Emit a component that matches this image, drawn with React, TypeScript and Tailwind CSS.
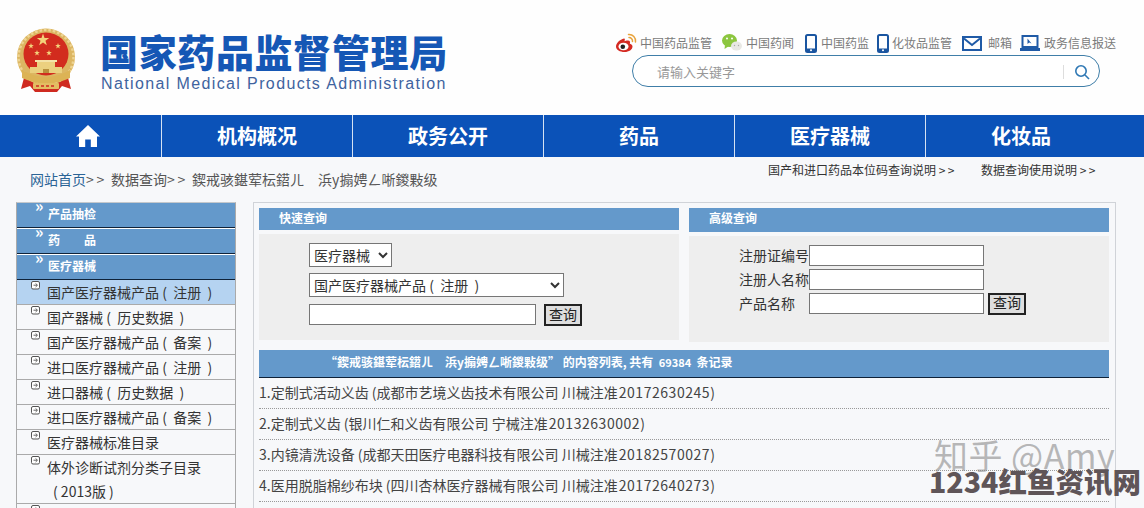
import React from "react";

const FONT = '"Noto Sans CJK SC", "Liberation Sans", sans-serif';

function Emblem() {
  const star = (cx: number, cy: number, r: number) => {
    const pts: string[] = [];
    for (let i = 0; i < 10; i++) {
      const rad = i % 2 === 0 ? r : r * 0.4;
      const a = (-90 + i * 36) * (Math.PI / 180);
      pts.push(`${(cx + rad * Math.cos(a)).toFixed(2)},${(cy + rad * Math.sin(a)).toFixed(2)}`);
    }
    return <polygon key={`${cx}-${cy}`} points={pts.join(" ")} fill="#f3d27a" />;
  };
  return (
    <svg width="60" height="65" viewBox="0 0 60 65" className="shrink-0">
      <path d="M9 46 L5 61 L14 58 L19 64 L41 64 L46 58 L55 61 L51 46 Z" fill="#cf2a20" />
      <ellipse cx="30" cy="29" rx="29" ry="28.500" fill="#dcb662" />
      <ellipse cx="30" cy="29" rx="27.500" ry="27" fill="none" stroke="#eed493" strokeWidth="2.500" strokeDasharray="2.500 2" />
      <ellipse cx="30" cy="26" rx="22.500" ry="21.500" fill="#d22c1e" />
      {star(27, 12, 6.500)}
      {star(15, 18, 3)}
      {star(21, 25, 3)}
      {star(33, 25, 3)}
      {star(42, 18, 3)}
      <rect x="19" y="32" width="22" height="2" fill="#f4e3a8" />
      <rect x="21" y="34" width="18" height="5" fill="#ecd07f" />
      <rect x="14" y="39" width="32" height="6" fill="#ead07f" />
      <rect x="27" y="41" width="6" height="4" fill="#b88f3c" />
      <path d="M6 42 Q30 56 54 42 L54 50 Q30 61 6 50 Z" fill="#dcb355" />
      <rect x="17" y="55" width="26" height="6" rx="1" fill="#e3bd62" />
      <path d="M20 58H40" stroke="#cf2a20" strokeWidth="1.500" strokeDasharray="3 2" />
    </svg>
  );
}

function Weibo() {
  return (
    <svg width="22" height="20" viewBox="0 0 22 20" className="shrink-0">
      <path d="M9 5.500C5 6.500 1 10 1 13.500 1 16.800 5 19 9.500 19 14 19 17.500 16.500 17.500 13.500 17.500 11.500 15.500 11 14.800 10.700 15.500 9 15 7.500 13 7.500 11.500 7.500 10 8 9.500 8.300 10 6.500 10 5.300 9 5.500Z" fill="#d42a22" />
      <ellipse cx="8.500" cy="13.500" rx="5" ry="3.800" fill="#fff" />
      <circle cx="7.800" cy="13.800" r="2.300" fill="#222" />
      <path d="M13.500 1.500A6.500 6.500 0 0 1 20.500 9M14 4.500A3.500 3.500 0 0 1 17.500 8.500" fill="none" stroke="#e8a33c" strokeWidth="1.500" strokeLinecap="round" />
    </svg>
  );
}

function Wechat() {
  return (
    <svg width="22" height="20" viewBox="0 0 22 20" className="shrink-0">
      <ellipse cx="8.500" cy="7.500" rx="7.500" ry="6.500" fill="#8cc63f" />
      <path d="M4 12 L3.500 16 L8 13Z" fill="#8cc63f" />
      <circle cx="6" cy="5.500" r="1" fill="#fff" />
      <circle cx="11" cy="5.500" r="1" fill="#fff" />
      <ellipse cx="15.500" cy="13" rx="5.500" ry="4.500" fill="#e8e8e4" />
      <circle cx="13.500" cy="12.500" r=".7" fill="#aaa" />
      <circle cx="17.500" cy="12.500" r=".7" fill="#aaa" />
    </svg>
  );
}

function Phone() {
  return (
    <svg width="12" height="19" viewBox="0 0 12 19" className="shrink-0">
      <rect x="1" y="1" width="10" height="17" rx="1.500" fill="none" stroke="#1a55a0" strokeWidth="2" />
      <rect x="1" y="14.500" width="10" height="3.500" fill="#1a55a0" />
      <circle cx="6" cy="16.200" r="1" fill="#fff" />
    </svg>
  );
}

function Mail() {
  return (
    <svg width="20" height="15" viewBox="0 0 20 15" className="shrink-0">
      <rect x="1" y="1" width="18" height="13" fill="none" stroke="#1f5aa6" strokeWidth="2" />
      <path d="M2 2.500 L10 9 L18 2.500" fill="none" stroke="#1f5aa6" strokeWidth="2" />
    </svg>
  );
}

function Monitor() {
  return (
    <svg width="20" height="17" viewBox="0 0 20 17" className="shrink-0">
      <rect x="2.500" y="1" width="15" height="11" fill="none" stroke="#1f5aa6" strokeWidth="2" />
      <path d="M7.500 3.500 L7.500 9 L9.200 7.600 L11.500 8.500Z" fill="#1f5aa6" />
      <rect x="0" y="13" width="20" height="3" fill="#1f5aa6" />
    </svg>
  );
}

function TopLink({ icon, text, className }: { icon: React.ReactNode; text: string; className: string }) {
  return (
    <div className={`flex shrink-0 items-center whitespace-nowrap ${className}`}>
      {icon}
      <span className="text-[12px] leading-none text-[#7b7b7b]">{text}</span>
    </div>
  );
}

function SideHead({ text }: { text: string }) {
  return (
    <div className="relative flex h-[25px] items-center border-b border-[#0f2238] bg-[#6499cb] pb-[3px] pl-[31px] text-[12px] font-bold text-white">
      <span className="absolute left-[18px] top-[-6px] text-[16px] font-bold leading-none">»</span>
      {text}
    </div>
  );
}

function ArrowBox() {
  return (
    <svg width="10" height="9" viewBox="0 0 10 9" className="absolute left-[14px] top-[1px]">
      <rect x=".5" y=".5" width="8" height="7.500" rx="1.500" fill="#fff" stroke="#555" />
      <path d="M2.500 4.200H6M4.600 2.500 L6.500 4.200 L4.600 6" fill="none" stroke="#555" strokeWidth=".9" />
    </svg>
  );
}

function SideRow({ text, active, second }: { text: string; active?: boolean; second?: string }) {
  return (
    <div className={`relative border-b border-[#aaaaaa] pl-[30px] text-[14px] leading-[24px] text-[#333] ${active ? "bg-[#b5d3f1]" : ""}`}>
      <ArrowBox />
      <div className="min-h-[24px]">{text}</div>
      {second && <div className="pl-[6px]">{second}</div>}
    </div>
  );
}

function Btn() {
  return (
    <button className="h-[22px] w-[38px] border-2 border-[#222] bg-[#dedede] pb-[3px] text-[14px] leading-none text-[#222]">查询</button>
  );
}

const inputCls = "h-[21px] border border-[#767676] bg-white";
const selectCls = "h-[24px] border border-[#767676] bg-white text-[14px] text-[#333]";

function Row({ name, code }: { name: string; code: string }) {
  return (
    <div className="h-[31px] border-b border-dotted border-[#999] text-[14px] leading-[28px] text-[#444]">
      {name}
      <span className="ml-[1px] tracking-[0.55px]">{code})</span>
    </div>
  );
}

const MOJI = "鍥戒骇鍖荤枟鍣ㄦ　浜y搧娉ㄥ唽鍐敤级";
const Sep = () => <span className="mr-[4px] tracking-[2.750px]">&gt;&gt;</span>;
const reg = (s: string) => `${s}\u00a0(\u00a0\u00a0`;
const end = "\u00a0\u00a0)";

export default function App() {
  return (
    <div className="relative h-[508px] w-[1144px] overflow-hidden bg-[#f7f8fa]" style={{ fontFamily: FONT }}>
      <header className="flex h-[115px] justify-between bg-[#fefefe]">
        <div className="flex">
          <div className="ml-[16px] mt-[28px]"><Emblem /></div>
          <div className="ml-[24px] mt-[28px]">
            <div className="text-[38px] font-black leading-[46px] tracking-[0.650px] text-[#1557b5]">国家药品监督管理局</div>
            <div className="mt-[1px] pl-[1px] text-[16px] leading-[18px] tracking-[1.375px] text-[#3f639f]" style={{ fontFamily: '"Liberation Sans", sans-serif' }}>
              National Medical Products Administration
            </div>
          </div>
        </div>
        <div className="mr-[28px] mt-[33px] w-[500px]">
          <div className="flex h-[20px] items-center justify-end">
            <TopLink icon={<Weibo />} text="中国药品监管" className="gap-[3px]" />
            <TopLink icon={<Wechat />} text="中国药闻" className="ml-[9px] gap-[3px]" />
            <TopLink icon={<Phone />} text="中国药监" className="ml-[11px] gap-[4px]" />
            <TopLink icon={<Phone />} text="化妆品监管" className="ml-[8px] gap-[3px]" />
            <TopLink icon={<Mail />} text="邮箱" className="ml-[10px] gap-[6px]" />
            <TopLink icon={<Monitor />} text="政务信息报送" className="ml-[8px] gap-[4px]" />
          </div>
          <div className="ml-[16px] mr-[16px] mt-[2px] flex h-[32px] items-center rounded-full border border-[#3f7ea8] bg-white pl-[24px] pt-[1px]">
            <span className="flex-1 text-[13px] text-[#999]">请输入关键字</span>
            <span className="h-[14px] w-px bg-[#ddd]" />
            <span className="flex w-[35px] justify-center">
              <svg width="16" height="16" viewBox="0 0 16 16" fill="none" stroke="#2f78b4" strokeWidth="1.600">
                <circle cx="7" cy="7" r="5.200" />
                <path d="M11 11 L15 15" />
              </svg>
            </span>
          </div>
        </div>
      </header>

      <nav className="flex h-[42px] bg-[#0b52b8] text-[20px] font-bold text-white">
        <div className="flex w-[161px] items-center justify-center pl-[14px]">
          <svg width="26" height="24" viewBox="0 0 26 24" fill="#fff">
            <path d="M13 1 L25 12.500 L22 12.500 L22 23 L15.800 23 L15.800 15.500 L10.200 15.500 L10.200 23 L4 23 L4 12.500 L1 12.500Z" />
          </svg>
        </div>
        {["机构概况", "政务公开", "药品", "医疗器械", "化妆品"].map((t) => (
          <div key={t} className="flex w-[191px] items-center justify-center border-l border-[#d5e2f3]">{t}</div>
        ))}
      </nav>

      <div className="flex h-[45px] justify-between pl-[30px] pr-[46px]">
        <div className="pt-[12px] text-[14px] leading-[20px] text-[#555]">
          <span className="text-[#2b6496]">网站首页</span><Sep />数据查询<Sep />{MOJI}
        </div>
        <div className="flex gap-[24px] pt-[4px] text-[12px] leading-[18px] text-[#333]">
          <span>国产和进口药品本位码查询说明 <span className="tracking-[2.500px]">&gt;&gt;</span></span>
          <span>数据查询使用说明 <span className="tracking-[2.500px]">&gt;&gt;</span></span>
        </div>
      </div>

      <div className="flex pl-[16px]">
        <aside className="w-[220px] shrink-0 border-x border-t border-[#aaaaaa] border-t-[#c4c8cc]">
          <SideHead text="产品抽检" />
          <div className="h-px bg-white" />
          <SideHead text="药　　品" />
          <div className="h-px bg-white" />
          <SideHead text="医疗器械" />
          <SideRow text={`${reg("国产医疗器械产品")}注册${end}`} active />
          <SideRow text={`${reg("国产器械")}历史数据${end}`} />
          <SideRow text={`${reg("国产医疗器械产品")}备案${end}`} />
          <SideRow text={`${reg("进口医疗器械产品")}注册${end}`} />
          <SideRow text={`${reg("进口器械")}历史数据${end}`} />
          <SideRow text={`${reg("进口医疗器械产品")}备案${end}`} />
          <SideRow text="医疗器械标准目录" />
          <SideRow text="体外诊断试剂分类子目录" second={`(\u00a02013版\u00a0)`} />
          <SideRow text="" />
        </aside>

        <main className="ml-[17px] w-[863px] border-x border-t border-[#d0d3d8] px-[5px] pt-[5px]">
          <div className="flex gap-[10px]">
            <section className="w-[420px]">
              <div className="flex h-[22px] items-center bg-[#6499cb] pb-[2px] pl-[20px] text-[12px] font-bold text-white">快速查询</div>
              <div className="mt-[4px] flex h-[106px] flex-col items-start bg-[#eeeeee] pl-[50px] pt-[9px]">
                <select className={`${selectCls} w-[83px]`} defaultValue="a">
                  <option value="a">医疗器械</option>
                </select>
                <select className={`${selectCls} mt-[6px] w-[255px]`} defaultValue="a">
                  <option value="a">{`${reg("国产医疗器械产品")}注册${end}`}</option>
                </select>
                <div className="mt-[7px] flex items-start gap-[8px]">
                  <input className={`${inputCls} w-[227px]`} />
                  <Btn />
                </div>
              </div>
            </section>
            <section className="w-[420px]">
              <div className="flex h-[24px] items-center bg-[#6499cb] pb-[4px] pl-[20px] text-[12px] font-bold text-white">高级查询</div>
              <div className="mt-[4px] h-[106px] bg-[#eeeeee] pl-[50px] pt-[9px] text-[14px] text-[#333]">
                <div className="flex h-[21px] items-center"><span className="w-[70px]">注册证编号</span><input className={`${inputCls} w-[175px]`} /></div>
                <div className="mt-[3px] flex h-[21px] items-center"><span className="w-[70px]">注册人名称</span><input className={`${inputCls} w-[175px]`} /></div>
                <div className="mt-[3px] flex h-[21px] items-center">
                  <span className="w-[70px]">产品名称</span>
                  <input className={`${inputCls} w-[175px]`} />
                  <span className="ml-[4px]"><Btn /></span>
                </div>
              </div>
            </section>
          </div>

          <div className="mt-[8px] flex h-[28px] w-[850px] items-center whitespace-pre border-b border-[#0f2238] bg-[#6499cb] pb-[3px] pl-[66px] text-[12px] font-bold text-white">
            “{MOJI}” 的内容列表, 共有  <span className="text-[11px]">69384</span>  条记录
          </div>
          <div className="w-[850px]">
            <Row name="1.定制式活动义齿 (成都市艺境义齿技术有限公司 川械注准" code="20172630245" />
            <Row name="2.定制式义齿 (银川仁和义齿有限公司 宁械注准" code="20132630002" />
            <Row name="3.内镜清洗设备 (成都天田医疗电器科技有限公司 川械注准" code="20182570027" />
            <Row name="4.医用脱脂棉纱布块 (四川杏林医疗器械有限公司 川械注准" code="20172640273" />
          </div>
        </main>
      </div>

      <div className="absolute left-[934px] top-[435px] whitespace-nowrap text-[34px] leading-[40px] tracking-[0.5px] text-[#8a8a8a]/60">知乎 @Amy</div>
      <div className="absolute left-[929px] top-[462px] whitespace-nowrap text-[28.500px] font-black leading-[38px] text-[#5f5558]">1234红鱼资讯网</div>
    </div>
  );
}
